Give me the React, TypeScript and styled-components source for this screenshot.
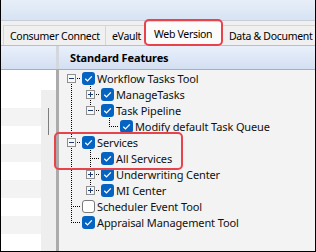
import React from 'react';
import styled, { createGlobalStyle } from 'styled-components';

const Global = createGlobalStyle`
  html, body { margin: 0; padding: 0; background: #fff; }
  body { font-family: "Noto Sans", "Liberation Sans", sans-serif; font-size: 11px; letter-spacing: -0.12px; color: #000; }
  * { box-sizing: border-box; }
`;

const Frame = styled.div`
  position: relative;
  width: 316px;
  height: 252px;
  border-left: 1px solid #000;
  border-right: 1px solid #000;
  border-bottom: 1px solid #000;
  display: flex;
  flex-direction: column;
  overflow: hidden;
  background: #f0f0f0;
`;

const TopBand = styled.div`
  flex: none;
  height: 20px;
  background: linear-gradient(#e7eef9, #d7e3f3);
`;

const TabStrip = styled.div`
  flex: none;
  height: 25px;
  border-top: 1px solid #c6ceda;
  background: #f0f0f0;
  display: flex;
  align-items: flex-end;
  padding-left: 3px;
  overflow: hidden;
`;

const Tab = styled.div<{ $sel?: boolean; $w: number; $pad: number }>`
  flex: none;
  width: ${(p) => p.$w}px;
  height: ${(p) => (p.$sel ? 24 : 20)}px;
  margin-left: -1px;
  display: flex;
  align-items: center;
  padding-left: ${(p) => p.$pad}px;
  border: 1px solid #d6d6d6;
  border-bottom: none;
  background: ${(p) => (p.$sel ? '#fbfbfb' : '#f0f0f0')};
  font-size: 10.5px;
  letter-spacing: -0.3px;
  white-space: nowrap;
  color: #000;
`;

const Main = styled.div`
  flex: 1;
  display: flex;
  min-height: 0;
`;

const Panel = styled.div<{ $w?: number }>`
  display: flex;
  flex-direction: column;
  ${(p) => (p.$w ? `width: ${p.$w}px; flex: none;` : 'flex: 1; min-width: 0;')}
`;

const Header = styled.div`
  flex: none;
  height: 25px;
  border-top: 1px solid #b9bec7;
  border-bottom: 1px solid #a9afb9;
  background: linear-gradient(#e9f0fb, #d3dff2);
  display: flex;
  align-items: center;
  padding-left: 11px;
  font-weight: 700;
  font-size: 11px;
  white-space: nowrap;
`;

const Splitter = styled.div`
  flex: none;
  width: 3px;
  display: flex;
  flex-direction: column;
`;

const SplitTop = styled.div`
  flex: none;
  height: 25px;
  background: #d3d7de;
  border-top: 1px solid #b9bec7;
  border-bottom: 1px solid #a9afb9;
`;

const SplitBody = styled.div`
  flex: 1;
  background: #ababab;
`;

const LeftBody = styled.div`
  flex: 1;
  display: flex;
  flex-direction: column;
  background: #fff;
`;

const BlankRow = styled.div`
  flex: none;
  height: 20px;
  background: #fff;
`;

const ListArea = styled.div`
  flex: 1;
  display: flex;
  min-height: 0;
  overflow: hidden;
`;

const StripeCol = styled.div`
  flex: none;
  width: 40px;
  display: flex;
  flex-direction: column;
`;

const Stripe = styled.div<{ $alt: boolean }>`
  flex: none;
  height: 18px;
  background: ${(p) => (p.$alt ? '#f3f3f3' : '#fff')};
`;

const Track = styled.div`
  position: relative;
  flex: none;
  width: 15px;
  background: #eeeeee;
`;

const Thumb = styled.div`
  position: absolute;
  left: 7px;
  top: 18px;
  width: 1px;
  height: 27px;
  background: #7d7d7d;
`;

const TreeBody = styled.div`
  flex: 1;
  background: #f3f3f3;
  padding-left: 3px;
  display: flex;
  flex-direction: column;
`;

const Row = styled.div`
  flex: none;
  height: 16px;
  display: flex;
  align-items: center;
  white-space: nowrap;
`;

const dots = (dir: string) =>
  `repeating-linear-gradient(${dir}, #000 0 1px, transparent 1px 2px)`;

const Guide = styled.span<{ $on: boolean }>`
  position: relative;
  flex: none;
  width: 19px;
  height: 16px;
  &::before {
    content: '';
    display: ${(p) => (p.$on ? 'block' : 'none')};
    position: absolute;
    left: 9px;
    top: 0;
    bottom: 0;
    width: 1px;
    background: ${dots('to bottom')};
  }
`;

const Connector = styled.span<{ $up: boolean; $down: boolean }>`
  position: relative;
  flex: none;
  width: 19px;
  height: 16px;
  &::before {
    content: '';
    position: absolute;
    left: 9px;
    width: 1px;
    top: ${(p) => (p.$up ? '0' : '8px')};
    bottom: ${(p) => (p.$down ? '0' : '8px')};
    background: ${dots('to bottom')};
  }
  &::after {
    content: '';
    position: absolute;
    left: 9px;
    right: 0;
    top: 8px;
    height: 1px;
    background: ${dots('to right')};
  }
`;

const ExpBox = styled.svg`
  position: absolute;
  left: 5px;
  top: 4px;
  z-index: 1;
`;

const Check = styled.svg`
  flex: none;
  margin-left: 1px;
`;

const Label = styled.span`
  margin-left: 2px;
  font-size: 11px;
  color: #111;
`;

const Annotation = styled.div<{ $x: number; $y: number; $w: number; $h: number }>`
  position: absolute;
  left: ${(p) => p.$x}px;
  top: ${(p) => p.$y}px;
  width: ${(p) => p.$w}px;
  height: ${(p) => p.$h}px;
  border: 2px solid #e8434a;
  border-radius: 5px;
  pointer-events: none;
`;

type Exp = 'plus' | 'minus' | undefined;

function Expander({ kind }: { kind: 'plus' | 'minus' }) {
  return (
    <ExpBox width="9" height="9" viewBox="0 0 9 9">
      <rect x="0.5" y="0.5" width="8" height="8" fill="#f7f7f7" stroke="#8f8f8f" />
      <line x1="2" y1="4.5" x2="7" y2="4.5" stroke="#1f3d73" />
      {kind === 'plus' && <line x1="4.5" y1="2" x2="4.5" y2="7" stroke="#1f3d73" />}
    </ExpBox>
  );
}

function CheckBox({ on }: { on: boolean }) {
  return (
    <Check width="13" height="13" viewBox="0 0 13 13">
      {on ? (
        <>
          <rect x="0" y="0" width="13" height="13" rx="3" fill="#0563c1" />
          <path d="M3.3 6.7 L5.5 8.9 L9.8 4.4" fill="none" stroke="#fff" strokeWidth="1.3" />
        </>
      ) : (
        <rect x="0.5" y="0.5" width="12" height="12" rx="2.5" fill="#fff" stroke="#7a7a7a" />
      )}
    </Check>
  );
}

type Item = {
  label: string;
  guides: boolean[];
  up: boolean;
  down: boolean;
  exp: Exp;
  checked: boolean;
};

const items: Item[] = [
  { label: 'Workflow Tasks Tool', guides: [], up: false, down: true, exp: 'minus', checked: true },
  { label: 'ManageTasks', guides: [true], up: true, down: true, exp: 'plus', checked: true },
  { label: 'Task Pipeline', guides: [true], up: true, down: false, exp: 'minus', checked: true },
  { label: 'Modify default Task Queue', guides: [true, false], up: true, down: false, exp: undefined, checked: true },
  { label: 'Services', guides: [], up: true, down: true, exp: 'minus', checked: true },
  { label: 'All Services', guides: [true], up: true, down: true, exp: undefined, checked: true },
  { label: 'Underwriting Center', guides: [true], up: true, down: true, exp: 'plus', checked: true },
  { label: 'MI Center', guides: [true], up: true, down: false, exp: 'plus', checked: true },
  { label: 'Scheduler Event Tool', guides: [], up: true, down: true, exp: undefined, checked: false },
  { label: 'Appraisal Management Tool', guides: [], up: true, down: false, exp: undefined, checked: true },
];

const tabs = [
  { label: 'Consumer Connect', w: 103, pad: 6 },
  { label: 'eVault', w: 40, pad: 6 },
  { label: 'Web Version', w: 78, pad: 9, sel: true },
  { label: 'Data & Document', w: 100, pad: 7 },
];

export default function App() {
  return (
    <>
      <Global />
      <Frame>
        <TopBand />
        <TabStrip>
          {tabs.map((t) => (
            <Tab key={t.label} $w={t.w} $pad={t.pad} $sel={t.sel}>
              {t.label}
            </Tab>
          ))}
        </TabStrip>
        <Main>
          <Panel $w={55}>
            <Header />
            <LeftBody>
              <BlankRow />
              <ListArea>
                <StripeCol>
                  {Array.from({ length: 9 }).map((_, i) => (
                    <Stripe key={i} $alt={i % 2 === 1} />
                  ))}
                </StripeCol>
                <Track>
                  <Thumb />
                </Track>
              </ListArea>
            </LeftBody>
          </Panel>
          <Splitter>
            <SplitTop />
            <SplitBody />
          </Splitter>
          <Panel>
            <Header>Standard Features</Header>
            <TreeBody>
              {items.map((it) => (
                <Row key={it.label}>
                  {it.guides.map((g, i) => (
                    <Guide key={i} $on={g} />
                  ))}
                  <Connector $up={it.up} $down={it.down}>
                    {it.exp && <Expander kind={it.exp} />}
                  </Connector>
                  <CheckBox on={it.checked} />
                  <Label>{it.label}</Label>
                </Row>
              ))}
            </TreeBody>
          </Panel>
        </Main>
        <Annotation $x={143} $y={19} $w={79} $h={27} />
        <Annotation $x={53} $y={132} $w={129} $h={38} />
      </Frame>
    </>
  );
}
